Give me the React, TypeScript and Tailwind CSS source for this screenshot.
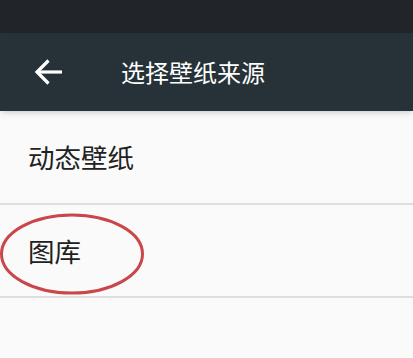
export default function App() {
  const font = { fontFamily: '"Noto Sans CJK SC", "Noto Sans", sans-serif' };

  return (
    <div className="w-[413px] h-[358px] bg-[#fafafa] overflow-hidden" style={font}>
      <div className="h-[33px] bg-[#212529]" />
      <header className="relative z-10 h-[78px] bg-[#263238] flex items-center shadow-md">
        <button className="w-[121px] h-full flex items-center pl-[33px]" aria-label="back">
          <svg width="31" height="30" viewBox="0 0 31 30" fill="none" stroke="white" strokeWidth="3.2" strokeLinecap="butt">
            <path d="M29 15H5" />
            <path d="M15.5 3.5L4 15l11.5 11.5" />
          </svg>
        </button>
        <h1 className="text-white text-[24px] leading-none">选择壁纸来源</h1>
      </header>
      <ul>
        <li className="h-[94px] flex items-center pl-[28px] border-b-2 border-[#dedede] text-[26.5px] text-[#212121]">
          动态壁纸
        </li>
        <li className="relative h-[93px] flex items-center pl-[28px] border-b-2 border-[#dedede] text-[26.5px] text-[#212121]">
          图库
          <svg className="absolute left-0 top-[8px]" width="146" height="82" viewBox="0 0 146 82" fill="none">
            <ellipse cx="72" cy="41" rx="70.5" ry="39" stroke="#c9474b" strokeWidth="3" />
          </svg>
        </li>
      </ul>
    </div>
  );
}
